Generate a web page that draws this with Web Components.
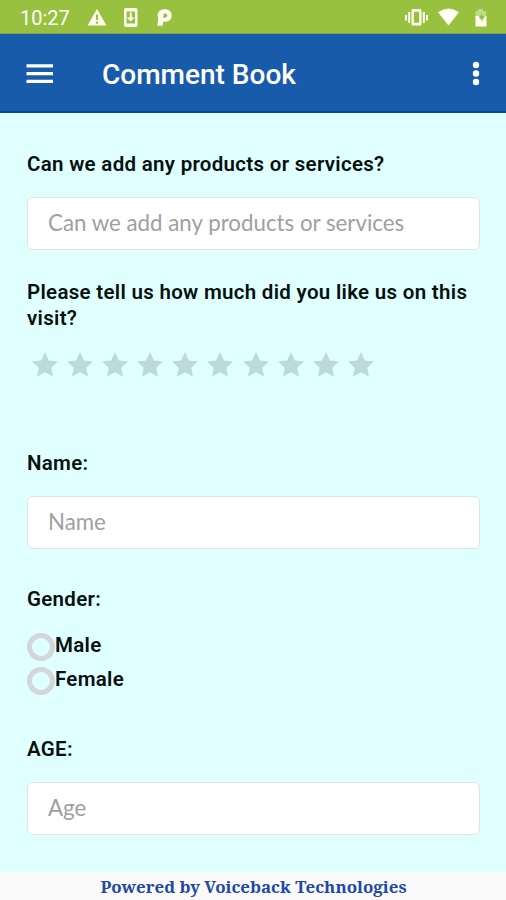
<!DOCTYPE html>
<html lang="en">
<head>
<meta charset="utf-8">
<title>Comment Book</title>
<style>
html,body{margin:0;height:100%}
body{background:#e0ffff;font-family:Roboto,"Liberation Sans",sans-serif;overflow:hidden}
</style>
</head>
<body>
<comment-app></comment-app>
<script>
const define = (name, html, setup) => customElements.define(name, class extends HTMLElement {
  constructor() {
    super();
    this.attachShadow({mode: 'open'}).innerHTML = html;
  }
  connectedCallback() { if (setup) setup(this, this.shadowRoot); }
});

define('status-bar', `<style>
:host{display:flex;align-items:center;height:34px;box-sizing:border-box;padding:0 17px 0 20px;background:#99c140;color:#fff;flex:none;border-bottom:1px solid #7ba05b}
time{font-size:20px;line-height:34px;width:65px;font-weight:450;position:relative;top:1px}
svg{display:block;fill:#fffff4}
.gap{flex:1}
</style>
<time>10:27</time>
<svg width="90" height="33" viewBox="85 0 90 33"><path fill-rule="evenodd" d="M97 9L106.500 25.500H87.500zM95.900 14.500h2.200v5.500h-2.200zM95.900 21.500h2.200v2.200h-2.200z"/><path fill-rule="evenodd" d="M126 8h9.500q2 0 2 2v15q0 2-2 2h-9.500q-2 0-2-2V10q0-2 2-2zM126.500 11.500v12h8.500v-12z"/><path d="M129.800 12.500h1.900v5h2.900l-3.900 4-3.900-4h3z"/><path fill-rule="evenodd" d="M157.300 25.700L158.300 17.500L157.600 16C157.600 11.500 160.500 9.200 164.600 9.200C169 9.200 171.700 11.700 171.700 15.300C171.700 19.400 169 21.700 165.600 21.700H163.200L162.600 25.700zM163.800 13.500L163 17.700H165C166.600 17.700 167.300 16.800 167.300 15.500C167.300 14.300 166.400 13.500 165 13.500z"/></svg>
<span class="gap"></span>
<svg width="86" height="33" viewBox="403 0 86 33"><path fill-rule="evenodd" d="M413 9h7q1.500 0 1.500 1.500v13.500q0 1.500-1.500 1.500H413q-1.500 0-1.500-1.500v-13.500Q411.500 9 413 9zM413.800 11.800v11h5.400v-11z"/><path d="M408.200 12h2v11h-2zM405 15h1.900v5.500H405zM422.800 12h2v11h-2zM426.100 15h1.900v5.500h-1.900z"/><path d="M438 12.200Q448.500 4.800 459 12.200L448.500 25.500z"/><path fill-opacity=".4" d="M475.500 11h2.500V9h5v2h3v7h-10.500z"/><path d="M475.500 16h3l2 3.500 4-3.500h2v10.500h-11z"/><path fill="#99c140" d="M482.200 13l-3.200 5h2.400v4l3.600-6h-2.800z"/></svg>`);

define('app-header', `<style>
:host{display:flex;align-items:center;height:79px;box-sizing:border-box;background:#195bab;color:#fff;padding:0 26px;border-bottom:2px solid #0c4693;flex:none}
svg{display:block;fill:#fff}
h1{margin:0 0 0 49px;flex:1;font-size:28px;line-height:76px;font-weight:500;position:relative;top:2px}
</style>
<svg width="27" height="24"><path d="M.5 3.300H27v3.200H.5zM.5 11H27v3.200H.5zM.5 18.700H27v3.200H.5z"/></svg>
<h1><slot></slot></h1>
<svg width="8" height="26"><circle cx="4" cy="5" r="3.200"/><circle cx="4" cy="13.500" r="3.200"/><circle cx="4" cy="22" r="3.200"/></svg>`);

define('form-label', `<style>
:host{display:block;font-size:20.500px;line-height:26.400px;font-weight:600;color:#06100f;letter-spacing:.3px}
</style><slot></slot>`);

define('text-field', `<style>
:host{display:block}
input{display:block;width:100%;height:53px;box-sizing:border-box;margin:0;padding:0 20px 2px 20px;border:1.500px solid #dfe3e3;border-radius:6px;background:#fff;font:400 22.300px Lato,sans-serif;color:#333;outline:0}
input::placeholder{color:#a0a0a0;opacity:1}
</style><input>`, (el, root) => {
  root.querySelector('input').placeholder = el.getAttribute('placeholder');
});

define('star-rating', `<style>
:host{display:flex;gap:9.200px;padding-left:4.500px;height:25px}
svg{display:block;width:26px;height:25px;fill:#bed9da;flex:none}
</style>`, (el, root) => {
  const star = '<svg viewBox="0 0 26 25"><path d="M13 0L16.900 8.400L26 9.500L19.300 15.700L21 24.800L13 20.300L5 24.800L6.700 15.700L0 9.500L9.100 8.400z"/></svg>';
  root.innerHTML += star.repeat(Number(el.getAttribute('count')));
});

define('radio-option', `<style>
:host{display:flex;align-items:flex-start;height:34px}
i{box-sizing:border-box;width:28px;height:28px;border:5px solid #d3d6da;border-radius:50%;flex:none}
form-label{margin-top:-1px}
</style><i></i><form-label><slot></slot></form-label>`);

define('form-group', `<style>
:host{display:flex;flex-direction:column}
</style><slot name="label"></slot><slot></slot>`);

define('app-footer', `<style>
:host{display:block;height:28px;flex:none;background:#fafafa;color:#2248a5;text-align:center;font:700 16.900px/30px "Noto Serif","Droid Serif","DejaVu Serif Condensed","Liberation Serif",serif;white-space:nowrap;padding-left:1px}
</style><slot></slot>`);

define('comment-app', `<style>
:host{display:flex;flex-direction:column;width:506px;height:900px}
main{flex:1;box-sizing:border-box;padding:38px 26px 0 27px;background:#e0ffff;min-height:0}
text-field{margin:20px 0 0 0}
.q1{height:128px}.q2{height:171px}.q3{height:136px}.q4{height:150px}
.q2 star-rating{margin-top:20px}
.radios{margin-top:21px}
</style>
<status-bar></status-bar>
<app-header>Comment Book</app-header>
<main>
<form-group class="q1"><form-label slot="label">Can we add any products or services?</form-label><text-field placeholder="Can we add any products or services"></text-field></form-group>
<form-group class="q2"><form-label slot="label">Please tell us how much did you like us on this visit?</form-label><star-rating count="10"></star-rating></form-group>
<form-group class="q3"><form-label slot="label">Name:</form-label><text-field placeholder="Name"></text-field></form-group>
<form-group class="q4"><form-label slot="label">Gender:</form-label><div class="radios"><radio-option>Male</radio-option><radio-option>Female</radio-option></div></form-group>
<form-group><form-label slot="label">AGE:</form-label><text-field placeholder="Age"></text-field></form-group>
</main>
<app-footer>Powered by Voiceback Technologies</app-footer>`);
</script>
</body>
</html>
